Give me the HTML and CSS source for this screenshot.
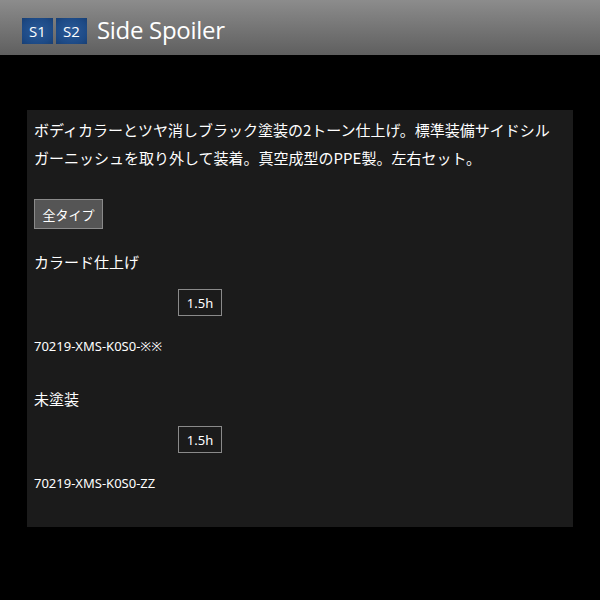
FILE: index.html
```html
<!DOCTYPE html>
<html lang="ja">
<head>
<meta charset="utf-8">
<link rel="stylesheet" href="styles.css">
</head>
<body>
<header class="header">
  <span class="badge">S1</span>
  <span class="badge">S2</span>
  <h1 class="title">Side Spoiler</h1>
</header>
<main class="panel">
  <p class="desc">ボディカラーとツヤ消しブラック塗装の2トーン仕上げ。標準装備サイドシルガーニッシュを取り外して装着。真空成型のPPE製。左右セット。</p>
  <button class="btn">全タイプ</button>
  <section class="item">
    <h2 class="item-name">カラード仕上げ</h2>
    <div class="hours">1.5h</div>
    <div class="code">70219-XMS-K0S0-※※</div>
  </section>
  <section class="item">
    <h2 class="item-name">未塗装</h2>
    <div class="hours">1.5h</div>
    <div class="code">70219-XMS-K0S0-ZZ</div>
  </section>
</main>
</body>
</html>
```
FILE: styles.css
```css
html, body {
  margin: 0;
  padding: 0;
  background: #000;
  width: 600px;
  height: 600px;
  overflow: hidden;
  font-family: "Noto Sans CJK JP", "Noto Sans", sans-serif;
  color: #fff;
}
.header {
  height: 55px;
  background: linear-gradient(#8c8c8c, #5f5f5f);
  display: flex;
  align-items: flex-start;
  padding: 18px 0 0 22px;
  box-sizing: border-box;
  gap: 3px;
}
.badge {
  width: 31px;
  height: 26px;
  background: radial-gradient(ellipse at center, #2b5a98 0%, #1d4a86 70%, #183f74 100%);
  color: #fff;
  font-family: "Open Sans", sans-serif;
  font-size: 15px;
  display: flex;
  align-items: center;
  justify-content: center;
}
.title {
  margin: -5px 0 0 7px;
  font-family: "Open Sans", sans-serif;
  font-weight: 400;
  font-size: 24px;
  line-height: 33px;
  color: #fff;
  letter-spacing: -0.3px;
}
.panel {
  margin: 55px 0 0 27px;
  width: 546px;
  height: 417px;
  background: #1b1b1b;
  box-sizing: border-box;
  padding: 6px 7px;
}
.desc {
  margin: 0;
  padding-right: 12px;
  font-size: 15px;
  line-height: 28px;
}
.btn {
  margin-top: 27px;
  display: block;
  width: 69px;
  height: 30px;
  background: #555;
  border: 1px solid #8a8a8a;
  color: #fff;
  font-family: "Noto Sans CJK JP", sans-serif;
  font-size: 13px;
  padding: 0;
}
.item-name {
  margin: 21px 0 0;
  font-weight: 400;
  font-size: 15px;
  line-height: 24px;
}
.hours {
  margin: 15px 0 0 144px;
  width: 44px;
  height: 27px;
  box-sizing: border-box;
  border: 1px solid #8a8a8a;
  font-family: "Noto Sans", sans-serif;
  font-size: 13px;
  display: flex;
  align-items: center;
  justify-content: center;
}
.code {
  margin-top: 22px;
  font-family: "Noto Sans", "Noto Sans CJK JP", sans-serif;
  font-size: 13px;
  line-height: 16px;
}
.item + .item .item-name {
  margin-top: 33px;
}
```
